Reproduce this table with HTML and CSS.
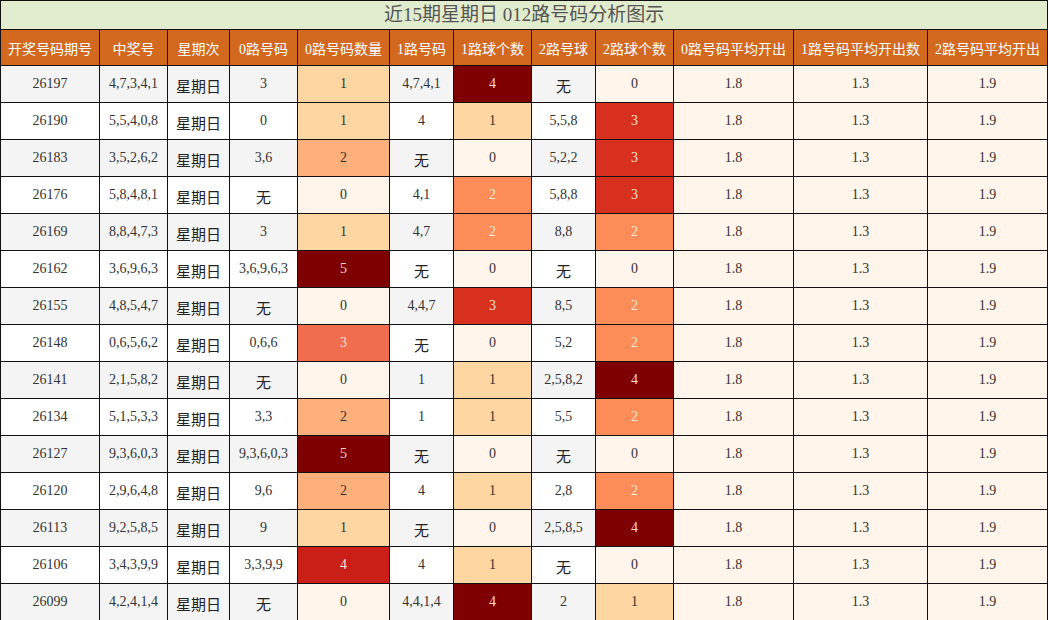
FILE: index.html
```html
<!DOCTYPE html>
<html lang="zh">
<head>
<meta charset="utf-8">
<title>近15期星期日 012路号码分析图示</title>
<link rel="stylesheet" href="styles.css">
</head>
<body>
<table class="grid">
<colgroup>
<col class="w99"><col class="w68"><col class="w62"><col class="w68"><col class="w92"><col class="w64"><col class="w78"><col class="w64"><col class="w78"><col class="w120"><col class="w134"><col class="w120">
</colgroup>
<thead>
<tr><th class="title" colspan="12">近15期星期日 012路号码分析图示</th></tr>
<tr class="head">
<th>开奖号码期号</th><th>中奖号</th><th>星期次</th><th>0路号码</th><th>0路号码数量</th><th>1路号码</th><th>1路球个数</th><th>2路号球</th><th>2路球个数</th><th>0路号码平均开出</th><th>1路号码平均开出数</th><th>2路号码平均开出</th>
</tr>
</thead>
<tbody>
<tr class="odd"><td>26197</td><td>4,7,3,4,1</td><td class="cn">星期日</td><td>3</td><td class="v1">1</td><td>4,7,4,1</td><td class="b4">4</td><td class="cn">无</td><td class="v0">0</td><td class="v0">1.8</td><td class="v0">1.3</td><td class="v0">1.9</td></tr>
<tr><td>26190</td><td>5,5,4,0,8</td><td class="cn">星期日</td><td>0</td><td class="v1">1</td><td>4</td><td class="v1">1</td><td>5,5,8</td><td class="b3">3</td><td class="v0">1.8</td><td class="v0">1.3</td><td class="v0">1.9</td></tr>
<tr class="odd"><td>26183</td><td>3,5,2,6,2</td><td class="cn">星期日</td><td>3,6</td><td class="a2">2</td><td class="cn">无</td><td class="v0">0</td><td>5,2,2</td><td class="b3">3</td><td class="v0">1.8</td><td class="v0">1.3</td><td class="v0">1.9</td></tr>
<tr><td>26176</td><td>5,8,4,8,1</td><td class="cn">星期日</td><td class="cn">无</td><td class="v0">0</td><td>4,1</td><td class="b2">2</td><td>5,8,8</td><td class="b3">3</td><td class="v0">1.8</td><td class="v0">1.3</td><td class="v0">1.9</td></tr>
<tr class="odd"><td>26169</td><td>8,8,4,7,3</td><td class="cn">星期日</td><td>3</td><td class="v1">1</td><td>4,7</td><td class="b2">2</td><td>8,8</td><td class="b2">2</td><td class="v0">1.8</td><td class="v0">1.3</td><td class="v0">1.9</td></tr>
<tr><td>26162</td><td>3,6,9,6,3</td><td class="cn">星期日</td><td>3,6,9,6,3</td><td class="a5">5</td><td class="cn">无</td><td class="v0">0</td><td class="cn">无</td><td class="v0">0</td><td class="v0">1.8</td><td class="v0">1.3</td><td class="v0">1.9</td></tr>
<tr class="odd"><td>26155</td><td>4,8,5,4,7</td><td class="cn">星期日</td><td class="cn">无</td><td class="v0">0</td><td>4,4,7</td><td class="b3">3</td><td>8,5</td><td class="b2">2</td><td class="v0">1.8</td><td class="v0">1.3</td><td class="v0">1.9</td></tr>
<tr><td>26148</td><td>0,6,5,6,2</td><td class="cn">星期日</td><td>0,6,6</td><td class="a3">3</td><td class="cn">无</td><td class="v0">0</td><td>5,2</td><td class="b2">2</td><td class="v0">1.8</td><td class="v0">1.3</td><td class="v0">1.9</td></tr>
<tr class="odd"><td>26141</td><td>2,1,5,8,2</td><td class="cn">星期日</td><td class="cn">无</td><td class="v0">0</td><td>1</td><td class="v1">1</td><td>2,5,8,2</td><td class="b4">4</td><td class="v0">1.8</td><td class="v0">1.3</td><td class="v0">1.9</td></tr>
<tr><td>26134</td><td>5,1,5,3,3</td><td class="cn">星期日</td><td>3,3</td><td class="a2">2</td><td>1</td><td class="v1">1</td><td>5,5</td><td class="b2">2</td><td class="v0">1.8</td><td class="v0">1.3</td><td class="v0">1.9</td></tr>
<tr class="odd"><td>26127</td><td>9,3,6,0,3</td><td class="cn">星期日</td><td>9,3,6,0,3</td><td class="a5">5</td><td class="cn">无</td><td class="v0">0</td><td class="cn">无</td><td class="v0">0</td><td class="v0">1.8</td><td class="v0">1.3</td><td class="v0">1.9</td></tr>
<tr><td>26120</td><td>2,9,6,4,8</td><td class="cn">星期日</td><td>9,6</td><td class="a2">2</td><td>4</td><td class="v1">1</td><td>2,8</td><td class="b2">2</td><td class="v0">1.8</td><td class="v0">1.3</td><td class="v0">1.9</td></tr>
<tr class="odd"><td>26113</td><td>9,2,5,8,5</td><td class="cn">星期日</td><td>9</td><td class="v1">1</td><td class="cn">无</td><td class="v0">0</td><td>2,5,8,5</td><td class="b4">4</td><td class="v0">1.8</td><td class="v0">1.3</td><td class="v0">1.9</td></tr>
<tr><td>26106</td><td>3,4,3,9,9</td><td class="cn">星期日</td><td>3,3,9,9</td><td class="a4">4</td><td>4</td><td class="v1">1</td><td class="cn">无</td><td class="v0">0</td><td class="v0">1.8</td><td class="v0">1.3</td><td class="v0">1.9</td></tr>
<tr class="odd"><td>26099</td><td>4,2,4,1,4</td><td class="cn">星期日</td><td class="cn">无</td><td class="v0">0</td><td>4,4,1,4</td><td class="b4">4</td><td>2</td><td class="v1">1</td><td class="v0">1.8</td><td class="v0">1.3</td><td class="v0">1.9</td></tr>
</tbody>
</table>
</body>
</html>
```
FILE: styles.css
```css
html, body {
  margin: 0;
  padding: 0;
  background: #ffffff;
}
.grid {
  width: 1048px;
  border-collapse: collapse;
  table-layout: fixed;
  font-family: "Liberation Serif", "Noto Sans CJK SC", serif;
  font-size: 14px;
  color: #333333;
}
.w99 { width: 99px; }
.w68 { width: 68px; }
.w62 { width: 62px; }
.w92 { width: 92px; }
.w64 { width: 64px; }
.w78 { width: 78px; }
.w120 { width: 120px; }
.w134 { width: 134px; }
.grid th,
.grid td {
  border: 1px solid #111111;
  padding: 0;
  text-align: center;
  vertical-align: middle;
  white-space: nowrap;
  overflow: hidden;
}
.grid .title {
  height: 28px;
  background: #e2ecce;
  color: #555555;
  font-weight: normal;
  font-size: 19px;
  line-height: 28px;
}
.head th {
  height: 35px;
  background: #d2691e;
  color: #ffffff;
  font-weight: normal;
  font-size: 14px;
}
.grid td {
  height: 36px;
  background: #ffffff;
}
.grid tr.odd td {
  background: #f4f4f4;
}
.grid td.cn {
  font-family: "Noto Sans CJK SC", sans-serif;
  font-size: 15px;
  color: #222222;
  padding-top: 2px;
  height: 34px;
}
.grid tr td.v0 { background: #fff5ea; }
.grid tr td.v1 { background: #fdd6a2; }
.grid tr td.a2 { background: #fdb07b; }
.grid tr td.a3 { background: #f06e4e; color: #fbe4dc; }
.grid tr td.a4 { background: #c91f16; color: #fbe4dc; }
.grid tr td.a5 { background: #7f0000; color: #f2d8d8; }
.grid tr td.b2 { background: #fc8d59; color: #fde8dc; }
.grid tr td.b3 { background: #d7301f; color: #fbe0d8; }
.grid tr td.b4 { background: #7f0000; color: #f2d8d8; }
```
